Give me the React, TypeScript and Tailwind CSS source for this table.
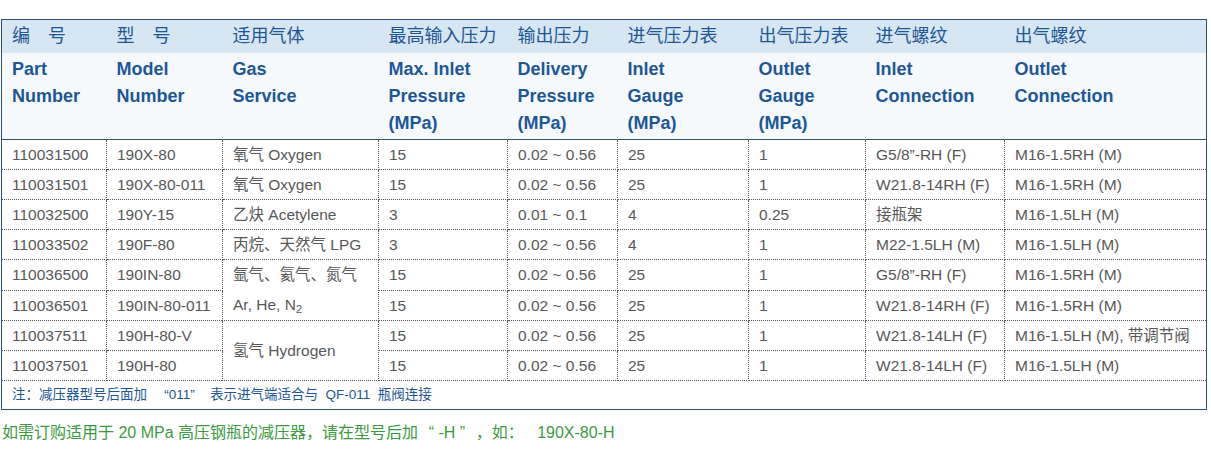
const cols = [105, 116, 156, 129, 110, 131, 117, 139, 202];

type Row = {
  part: string;
  model: string;
  gas?: React.ReactNode;
  gasSpan?: number;
  inlet: string;
  delivery: string;
  inGauge: string;
  outGauge: string;
  inConn: string;
  outConn: string;
};

const rows: Row[] = [
  { part: "110031500", model: "190X-80", gas: "氧气 Oxygen", inlet: "15", delivery: "0.02 ~ 0.56", inGauge: "25", outGauge: "1", inConn: "G5/8”-RH (F)", outConn: "M16-1.5RH (M)" },
  { part: "110031501", model: "190X-80-011", gas: "氧气 Oxygen", inlet: "15", delivery: "0.02 ~ 0.56", inGauge: "25", outGauge: "1", inConn: "W21.8-14RH (F)", outConn: "M16-1.5RH (M)" },
  { part: "110032500", model: "190Y-15", gas: "乙炔 Acetylene", inlet: "3", delivery: "0.01 ~ 0.1", inGauge: "4", outGauge: "0.25", inConn: "接瓶架", outConn: "M16-1.5LH (M)" },
  { part: "110033502", model: "190F-80", gas: "丙烷、天然气 LPG", inlet: "3", delivery: "0.02 ~ 0.56", inGauge: "4", outGauge: "1", inConn: "M22-1.5LH (M)", outConn: "M16-1.5LH (M)" },
  {
    part: "110036500",
    model: "190IN-80",
    gas: (
      <div className="flex flex-col">
        <span className="h-[30px] leading-[30px]">氩气、氦气、氮气</span>
        <span className="h-[30px] leading-[30px]">
          Ar, He, N<sub className="text-[11px]">2</sub>
        </span>
      </div>
    ),
    gasSpan: 2,
    inlet: "15",
    delivery: "0.02 ~ 0.56",
    inGauge: "25",
    outGauge: "1",
    inConn: "G5/8”-RH (F)",
    outConn: "M16-1.5RH (M)",
  },
  { part: "110036501", model: "190IN-80-011", inlet: "15", delivery: "0.02 ~ 0.56", inGauge: "25", outGauge: "1", inConn: "W21.8-14RH (F)", outConn: "M16-1.5RH (M)" },
  { part: "110037511", model: "190H-80-V", gas: "氢气 Hydrogen", gasSpan: 2, inlet: "15", delivery: "0.02 ~ 0.56", inGauge: "25", outGauge: "1", inConn: "W21.8-14LH (F)", outConn: "M16-1.5LH (M), 带调节阀" },
  { part: "110037501", model: "190H-80", inlet: "15", delivery: "0.02 ~ 0.56", inGauge: "25", outGauge: "1", inConn: "W21.8-14LH (F)", outConn: "M16-1.5LH (M)" },
];

const headCn = ["编　号", "型　号", "适用气体", "最高输入压力", "输出压力", "进气压力表", "出气压力表", "进气螺纹", "出气螺纹"];
const headEn = [
  ["Part", "Number"],
  ["Model", "Number"],
  ["Gas", "Service"],
  ["Max. Inlet", "Pressure", "(MPa)"],
  ["Delivery", "Pressure", "(MPa)"],
  ["Inlet", "Gauge", "(MPa)"],
  ["Outlet", "Gauge", "(MPa)"],
  ["Inlet", "Connection"],
  ["Outlet", "Connection"],
];

const font = "font-['Liberation_Sans','Noto_Sans_CJK_SC',sans-serif]";
const td = "h-[30px] px-[10px] py-0 border border-dotted border-[#555] align-middle whitespace-nowrap";

// full-width quote marks, as the CJK font of the original draws them
function OpenQ({ w }: { w: string }) {
  return <span className={`inline-block ${w} text-right`}>“</span>;
}
function CloseQ({ w }: { w: string }) {
  return <span className={`inline-block ${w} text-left`}>”</span>;
}

export default function App() {
  return (
    <div className={`bg-white w-[1211px] h-[462px] pt-[19px] ${font}`}>
      <table className="ml-[1px] w-[1206px] table-fixed border-collapse border border-solid border-[#2d5273]">
        <colgroup>
          {cols.map((w, i) => (
            <col key={i} style={{ width: w }} />
          ))}
        </colgroup>
        <thead>
          <tr className="bg-[#d6e6f2]">
            {headCn.map((h, i) => (
              <th key={i} className="h-[33px] px-[10px] text-left align-middle font-normal text-[18px] text-[#1d5796] whitespace-nowrap">
                {h}
              </th>
            ))}
          </tr>
          <tr className="bg-[#f5f9fc] border-b border-solid border-[#2d5273]">
            {headEn.map((lines, i) => (
              <th key={i} className="h-[87px] px-[10px] pt-[3px] text-left align-top font-bold text-[18px] leading-[27px] text-[#1d5796] whitespace-nowrap">
                {lines.map((l, j) => (
                  <div key={j}>{l}</div>
                ))}
              </th>
            ))}
          </tr>
        </thead>
        <tbody className="text-[15.5px] text-[#585858]">
          {rows.map((r, i) => (
            <tr key={i}>
              <td className={`${td} border-l-0`}>{r.part}</td>
              <td className={td}>{r.model}</td>
              {r.gas !== undefined && (
                <td className={td} rowSpan={r.gasSpan ?? 1}>
                  {r.gas}
                </td>
              )}
              <td className={td}>{r.inlet}</td>
              <td className={td}>{r.delivery}</td>
              <td className={td}>{r.inGauge}</td>
              <td className={td}>{r.outGauge}</td>
              <td className={td}>{r.inConn}</td>
              <td className={`${td} border-r-0`}>{r.outConn}</td>
            </tr>
          ))}
          <tr>
            <td colSpan={9} className="h-[29px] px-[10px] border-t border-dotted border-[#555] text-[13.5px] text-[#1d5796] whitespace-pre">
              注：减压器型号后面加 <OpenQ w="w-[18px]" />011<CloseQ w="w-[16px]" /> 表示进气端适合与  QF-011  瓶阀连接
            </td>
          </tr>
        </tbody>
      </table>
      <div className="mt-[11px] pl-[2px] text-[16px] text-[#3b9a3f] whitespace-pre">
        如需订购适用于 20 MPa 高压钢瓶的减压器，请在型号后加<OpenQ w="w-[16px]" /> -H <CloseQ w="w-[16px]" />，如：   190X-80-H
      </div>
    </div>
  );
}
